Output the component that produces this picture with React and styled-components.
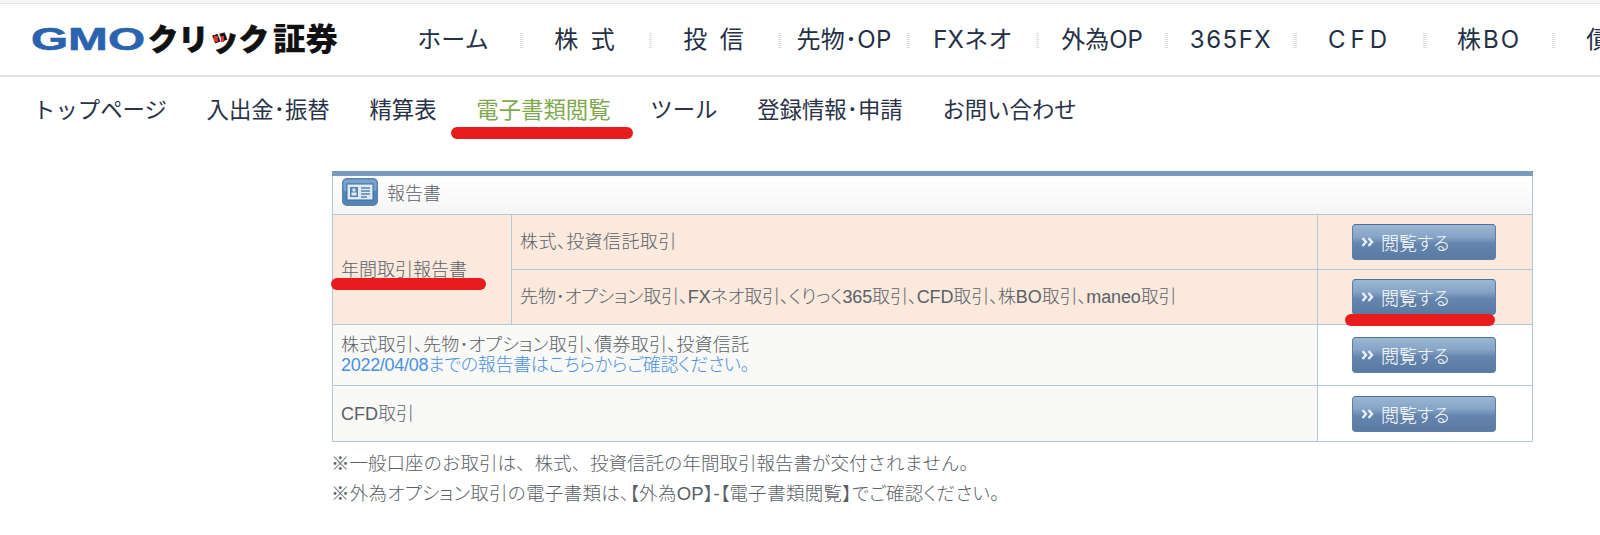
import React from 'react';
import styled, { createGlobalStyle } from 'styled-components';

const GlobalStyle = createGlobalStyle`
  html, body {
    margin: 0;
    padding: 0;
    background: #fff;
    overflow: hidden;
    font-family: "Noto Sans CJK JP", "Noto Sans", sans-serif;
  }
`;

const Page = styled.div`
  width: 1600px;
  height: 535px;
  overflow: hidden;
  position: relative;
`;

const Header = styled.header`
  height: 71px;
  margin-top: 3px;
  border-top: 1px solid #e4e4e4;
  border-bottom: 2px solid #e0e0e6;
  background: #fff;
  display: flex;
  align-items: center;
  padding-left: 31px;
  box-shadow: 0 -3px 0 #f6f6f6;
`;

const LogoSvg = styled.svg`
  width: 310px;
  height: 54px;
  flex: none;
`;

const GlobalNav = styled.nav`
  display: flex;
  align-items: center;
  margin-left: 53px;
  padding-top: 1px;
  flex: none;
`;

const GlobalItem = styled.div`
  width: 129px;
  flex: none;
  display: flex;
  align-items: center;
`;

const GlobalLabel = styled.div`
  flex: 1;
  text-align: center;
  white-space: nowrap;
  padding-right: ${(p) => p.$inset || 0}px;
  font-family: Inter, "Noto Sans CJK JP", sans-serif;
  font-size: 24px;
  line-height: 32px;
  letter-spacing: ${(p) => p.$spacing || 0}px;
  color: #252f45;
`;

const Divider = styled.span`
  width: 3px;
  height: 15px;
  flex: none;
  background-image: linear-gradient(#dcdcdc 50%, transparent 50%);
  background-size: 3px 2px;
`;

const SubNav = styled.nav`
  display: flex;
  gap: 39.7px;
  padding: 15px 0 0 33px;
  height: 50px;
  font-size: 22.4px;
  line-height: 32px;
  color: #2a3247;
`;

const SubItem = styled.div`
  white-space: nowrap;
  color: ${(p) => (p.$active ? '#7fa94e' : 'inherit')};
`;

const Main = styled.main`
  padding: 29px 0 0 332px;
  width: 1200px;
`;

const ReportTable = styled.table`
  width: 1200px;
  border-collapse: collapse;
  table-layout: fixed;
  border-top: 5px solid #7a9bc0;
  font-family: "Liberation Sans", "Noto Sans CJK JP", sans-serif;
  font-size: 18px;
  font-weight: 300;
  font-feature-settings: "palt";
  color: #5b6168;
`;

const TitleCell = styled.th`
  height: 41px;
  box-sizing: border-box;
  padding: 0 0 7px 9px;
  border: 1px solid #b4c6da;
  border-top: 0;
  background: linear-gradient(#ffffff, #f5f5f5);
  text-align: left;
  font-weight: 300;
  font-size: 18px;
  font-feature-settings: normal;
`;

const TitleInner = styled.div`
  display: flex;
  align-items: center;
  gap: 9px;
`;

const Cell = styled.td`
  padding: 0 8px;
  border: 1px solid #b4c6da;
  height: ${(p) => p.$h}px;
  box-sizing: border-box;
  background: ${(p) => (p.$plain ? '#f9f9f7' : '#fae9dc')};
  line-height: 20px;
  white-space: nowrap;
  letter-spacing: ${(p) => p.$track || 0}px;
`;

const ActionCell = styled.td`
  padding: 0;
  border: 1px solid #b4c6da;
  background: ${(p) => (p.$plain ? '#fff' : '#fae9dc')};
  text-align: center;
`;

const ViewButton = styled.div`
  box-sizing: border-box;
  width: 144px;
  height: 36px;
  margin-left: 34px;
  display: flex;
  align-items: center;
  gap: 7px;
  padding-left: 8px;
  border: 1px solid #5d7fa8;
  border-top-color: #4a6d9a;
  border-radius: 4px;
  background: linear-gradient(#9ab6d3 0%, #86a4c6 35%, #6485ad 55%, #597aa2 100%);
  color: #fff;
  font-size: 18px;
`;

const LinkText = styled.div`
  color: #4a90e2;
  letter-spacing: -0.3px;
`;

const Notes = styled.div`
  padding-top: 7px;
  margin-left: -1px;
  font-family: "Liberation Sans", "Noto Sans CJK JP", sans-serif;
  font-weight: 300;
  line-height: 30px;
  color: #5b6168;
  white-space: nowrap;
`;

const NoteLine = styled.div`
  font-size: 18.5px;
  font-feature-settings: ${(p) => (p.$tight ? '"palt"' : 'normal')};
  letter-spacing: ${(p) => (p.$tight ? 0.3 : 0)}px;
`;

const RedMark = styled.div`
  position: absolute;
  left: ${(p) => p.$x}px;
  top: ${(p) => p.$y}px;
  width: ${(p) => p.$w}px;
  height: 12px;
  border-radius: 6px;
  background: #e81c1c;
`;

const Logo = () => (
  <LogoSvg viewBox="0 0 310 54">
    <text x="0" y="37" fontFamily="Liberation Sans" fontWeight="700" fontSize="32" fill="#2a63ae" stroke="#2a63ae" strokeWidth="0.6" textLength="114" lengthAdjust="spacingAndGlyphs">GMO</text>
    <text x="117" y="37" fontFamily="Noto Sans CJK JP" fontWeight="900" fontSize="30" fill="#111" stroke="#111" strokeWidth="0.8" textLength="121" lengthAdjust="spacingAndGlyphs">クリック</text>
    <text x="242" y="37" fontFamily="Noto Sans CJK JP" fontWeight="900" fontSize="31" fill="#111" textLength="65" lengthAdjust="spacingAndGlyphs">証券</text>
    <rect x="183" y="23" width="4" height="6" fill="#e03030" />
    <rect x="190" y="23" width="3" height="6" fill="#e03030" />
  </LogoSvg>
);

const CardIcon = () => (
  <svg width="36" height="28" viewBox="0 0 36 28">
    <rect x="0" y="0" width="36" height="28" rx="5" fill="#5584b4" />
    <rect x="1.5" y="1.5" width="33" height="12" rx="4" fill="#7ba3c9" />
    <rect x="5" y="6" width="26" height="16" fill="#dfe9f3" stroke="#3d6c9f" strokeWidth="1" />
    <rect x="8" y="9" width="8" height="10" fill="#5584b4" />
    <rect x="10.5" y="10.5" width="3" height="3" fill="#dfe9f3" />
    <rect x="9.5" y="14.5" width="5" height="3" fill="#dfe9f3" />
    <path d="M19 10h9M19 13h9M19 16h9M19 19h6" stroke="#5584b4" strokeWidth="1.4" />
  </svg>
);

const Chevrons = () => (
  <svg width="13" height="12" viewBox="0 0 13 12" fill="none" stroke="#e8f0f8" strokeWidth="2.4">
    <path d="M1.5 2l3.5 4-3.5 4M7.5 2l3.5 4-3.5 4" />
  </svg>
);

const Button = () => (
  <ViewButton>
    <Chevrons />
    閲覧する
  </ViewButton>
);

const globalItems = [
  { label: 'ホーム', spacing: 0, inset: 8 },
  { label: '株 式', spacing: 3 },
  { label: '投 信', spacing: 3 },
  { label: '先物･OP', spacing: 0.3 },
  { label: 'FXネオ', spacing: 0.3 },
  { label: '外為OP', spacing: 0 },
  { label: '365FX', spacing: 1.5 },
  { label: 'CFD', spacing: 5 },
  { label: '株BO', spacing: 2 },
  { label: '債 券', spacing: 3 },
];

const subItems = ['トップページ', '入出金･振替', '精算表', '電子書類閲覧', 'ツール', '登録情報･申請', 'お問い合わせ'];

export default function App() {
  return (
    <Page>
      <GlobalStyle />
      <Header>
        <Logo />
        <GlobalNav>
          {globalItems.map((item) => (
            <GlobalItem key={item.label}>
              <GlobalLabel $spacing={item.spacing} $inset={item.inset}>{item.label}</GlobalLabel>
              <Divider />
            </GlobalItem>
          ))}
        </GlobalNav>
      </Header>
      <SubNav>
        {subItems.map((item, i) => (
          <SubItem key={item} $active={i === 3}>{item}</SubItem>
        ))}
      </SubNav>
      <Main>
        <ReportTable>
          <colgroup>
            <col style={{ width: 179 }} />
            <col style={{ width: 806 }} />
            <col style={{ width: 215 }} />
          </colgroup>
          <thead>
            <tr>
              <TitleCell colSpan={3}>
                <TitleInner><CardIcon />報告書</TitleInner>
              </TitleCell>
            </tr>
          </thead>
          <tbody>
            <tr>
              <Cell rowSpan={2}>年間取引報告書</Cell>
              <Cell $h={55} $track={0.4}>株式、投資信託取引</Cell>
              <ActionCell><Button /></ActionCell>
            </tr>
            <tr>
              <Cell $h={55} $track={-0.12}>先物･オプション取引、FXネオ取引、くりっく365取引、CFD取引、株BO取引、maneo取引</Cell>
              <ActionCell><Button /></ActionCell>
            </tr>
            <tr>
              <Cell colSpan={2} $h={61} $plain $track={0.2}>
                株式取引、先物･オプション取引、債券取引、投資信託
                <LinkText>2022/04/08までの報告書はこちらからご確認ください。</LinkText>
              </Cell>
              <ActionCell $plain><Button /></ActionCell>
            </tr>
            <tr>
              <Cell colSpan={2} $h={56} $plain>CFD取引</Cell>
              <ActionCell $plain><Button /></ActionCell>
            </tr>
          </tbody>
        </ReportTable>
        <Notes>
          <NoteLine>※一般口座のお取引は、株式、投資信託の年間取引報告書が交付されません。</NoteLine>
          <NoteLine $tight>※外為オプション取引の電子書類は、【外為OP】-【電子書類閲覧】でご確認ください。</NoteLine>
        </Notes>
      </Main>
      <RedMark $x={451} $y={127} $w={182} />
      <RedMark $x={331} $y={278} $w={155} />
      <RedMark $x={1345} $y={314} $w={150} />
    </Page>
  );
}
